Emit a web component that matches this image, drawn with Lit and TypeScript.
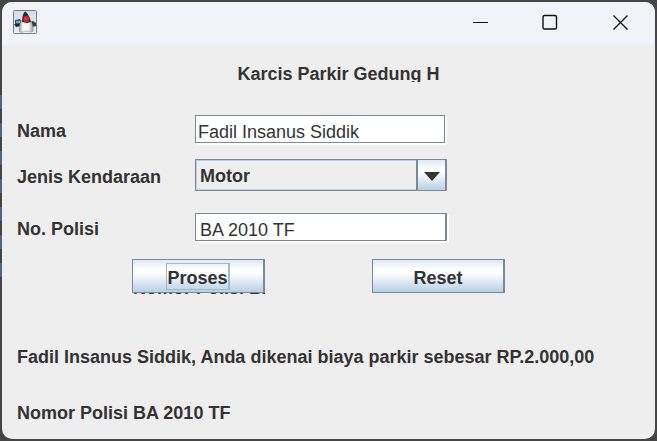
import { LitElement, html, css, svg } from "lit";
import { customElement, state } from "lit/decorators.js";

const duke = svg`
  <defs>
    <linearGradient id="sky" x1="0" y1="0" x2="0" y2="1">
      <stop offset="0" stop-color="#d5dbe6" /><stop offset="1" stop-color="#e9edf4" />
    </linearGradient>
    <linearGradient id="belly" x1="0" y1="0" x2="1" y2="0">
      <stop offset="0" stop-color="#a5a5a2" /><stop offset="0.3" stop-color="#ffffff" />
      <stop offset="0.7" stop-color="#f4f4f2" /><stop offset="1" stop-color="#9a9a95" />
    </linearGradient>
  </defs>
  <rect x="0.5" y="0.5" width="23" height="23" rx="1" fill="url(#sky)" stroke="#6484a3" />
  <path d="M2 10l5-1 2 3v3l-4 1-3-1z" fill="#35536c" />
  <path d="M3 11h4v2h-4z" fill="#78aed2" />
  <path d="M1 14h7v2l-5 1z" fill="#2b2927" />
  <path d="M17 12l3-1 3 2v3l-4 1z" fill="#3c3c3a" />
  <path d="M8 11C7 14 6 18 6.500 21.500c2 1.500 3.500 0.500 5-0.500 2 0.500 2.500 0.500 4 0 1.500 1.200 3 1.500 4.500 0C20 17 19.500 14 18 11z" fill="url(#belly)" stroke="#8a8a86" stroke-width="0.6" />
  <path d="M12 1.500c1.500 0 5 5.500 6 10.500l-4 1-5-1c0-4 1-9 3-10.500z" fill="#2d2d30" />
  <circle cx="13.300" cy="9" r="3" fill="#e01f28" />
  <circle cx="12.600" cy="8.200" r="1" fill="#f0555a" />
`;

@customElement("app-root")
export class AppRoot extends LitElement {
  @state() private nama = "Fadil Insanus Siddik";
  @state() private polisi = "BA 2010 TF";

  static styles = css`
    :host {
      display: flex;
      box-sizing: border-box;
      min-height: 100vh;
      padding: 2px;
      background:
        repeating-linear-gradient(#4b6688 0 14px, #454545 14px 28px) 0 95px / 2px 182px no-repeat,
        #454545;
      color: #333333;
      font: bold 18px/22px "Liberation Sans", Arial, sans-serif;
    }
    * { box-sizing: border-box; }
    .window {
      flex: 1;
      min-width: 0;
      display: flex;
      flex-direction: column;
      background: #eeeeee;
      border-radius: 10px;
      overflow: hidden;
    }
    .titlebar {
      display: flex;
      align-items: center;
      justify-content: space-between;
      height: 43px;
      padding: 0 0 3px 11px;
      background: #f1f3f9;
    }
    .logo { display: block; }
    .controls { display: flex; }
    .control {
      width: 70px;
      height: 40px;
      padding: 0;
      border: 0;
      background: none;
      display: grid;
      place-items: center;
    }
    .control svg { fill: none; stroke: #111111; }
    .content { padding: 18px 15px 12px; }
    h1 {
      margin: 0 0 33px 20px;
      height: 19px;
      overflow: hidden;
      font-size: 18px;
      line-height: 22px;
      text-align: center;
    }
    .fields {
      display: grid;
      grid-template-columns: 178px minmax(0, 252px);
      row-gap: 16px;
      align-items: center;
    }
    .fields label { padding-top: 4px; }
    .polisi { margin-top: 6px; }
    .text {
      width: calc(100% - 2px);
      height: 28px;
      padding: 6px 2px 0;
      border: 1px solid #7a8a99;
      border-radius: 0;
      background: #ffffff;
      box-shadow: 2px 2px 0 #ffffff;
      color: #333333;
      font: 18px/20px "Liberation Sans", Arial, sans-serif;
      outline: none;
    }
    .text.polisi {
      width: 100%;
      border-right-width: 2px;
      padding-left: 4px;
    }
    .combo { display: flex; position: relative; height: 32px; }
    select {
      width: 100%;
      height: 32px;
      padding: 2px 32px 0 4px;
      border: 1px solid #7a8a99;
      border-radius: 0;
      appearance: none;
      background: #eeeeee;
      box-shadow: inset 0 0 0 1px #b8cfe5;
      color: #333333;
      font: inherit;
      outline: none;
    }
    .arrow {
      position: absolute;
      top: 0;
      right: 0;
      width: 31px;
      height: 32px;
      display: grid;
      place-items: center;
      padding-top: 2px;
      border: 1px solid #7a8a99;
      border-width: 1px 2px 1px 2px;
      background: linear-gradient(#dde8f3, #ffffff 30%, #ffffff 40%, #b8cfe5);
      pointer-events: none;
    }
    .actions {
      display: flex;
      gap: 107px;
      margin: 18px 0 0 115px;
    }
    .slot { position: relative; width: 133px; }
    .action {
      position: relative;
      display: block;
      width: 133px;
      height: 34px;
      padding: 4px 0 0;
      border: 1px solid #7a8a99;
      border-right-width: 2px;
      border-radius: 0;
      background: linear-gradient(#dde8f3, #ffffff 30%, #ffffff 40%, #b8cfe5);
      color: #333333;
      font: inherit;
      outline: none;
    }
    .action.focused { padding: 0; }
    .focus {
      display: block;
      width: 64px;
      height: 27px;
      margin: 0 auto;
      padding-top: 3px;
      border: 1px solid #a3b8cc;
      border-right-width: 2px;
    }
    .behind {
      position: absolute;
      left: 1px;
      right: 0;
      bottom: -1px;
      height: 17px;
      line-height: 22px;
      overflow: hidden;
      white-space: nowrap;
    }
    .result { margin: 53px 0 0; }
    .result + .result { margin-top: 34px; }
  `;

  render() {
    return html`
      <main class="window">
        <header class="titlebar">
          <svg class="logo" width="24" height="24" viewBox="0 0 24 24" aria-hidden="true">${duke}</svg>
          <div class="controls">
            <button class="control" aria-label="Minimize">
              <svg width="16" height="16"><path d="M1 8.5h15" /></svg>
            </button>
            <button class="control" aria-label="Maximize">
              <svg width="16" height="16"><rect x="1" y="1.5" width="13.5" height="13.5" rx="1.5" stroke-width="1.4" /></svg>
            </button>
            <button class="control" aria-label="Close">
              <svg width="16" height="16"><path d="M1.500 1.500l14 14M15.500 1.500l-14 14" stroke-width="1.4" /></svg>
            </button>
          </div>
        </header>
        <section class="content">
          <h1>Karcis Parkir Gedung H</h1>
          <div class="fields">
            <label for="nama">Nama</label>
            <input id="nama" class="text" type="text" .value=${this.nama}
              @input=${(e: Event) => (this.nama = (e.target as HTMLInputElement).value)} />
            <label for="jenis">Jenis Kendaraan</label>
            <div class="combo">
              <select id="jenis"><option>Motor</option><option>Mobil</option></select>
              <span class="arrow">
                <svg width="16" height="9" aria-hidden="true"><path d="M0 0h16L8 9z" fill="#333333" /></svg>
              </span>
            </div>
            <label class="polisi" for="polisi">No. Polisi</label>
            <input id="polisi" class="text polisi" type="text" .value=${this.polisi}
              @input=${(e: Event) => (this.polisi = (e.target as HTMLInputElement).value)} />
          </div>
          <div class="actions">
            <div class="slot">
              <span class="behind" aria-hidden="true">Nomor Polisi BA 2010 TF</span>
              <button class="action focused"><span class="focus">Proses</span></button>
            </div>
            <button class="action">Reset</button>
          </div>
          <p class="result">${this.nama}, Anda dikenai biaya parkir sebesar RP.2.000,00</p>
          <p class="result">Nomor Polisi ${this.polisi}</p>
        </section>
      </main>
    `;
  }
}
